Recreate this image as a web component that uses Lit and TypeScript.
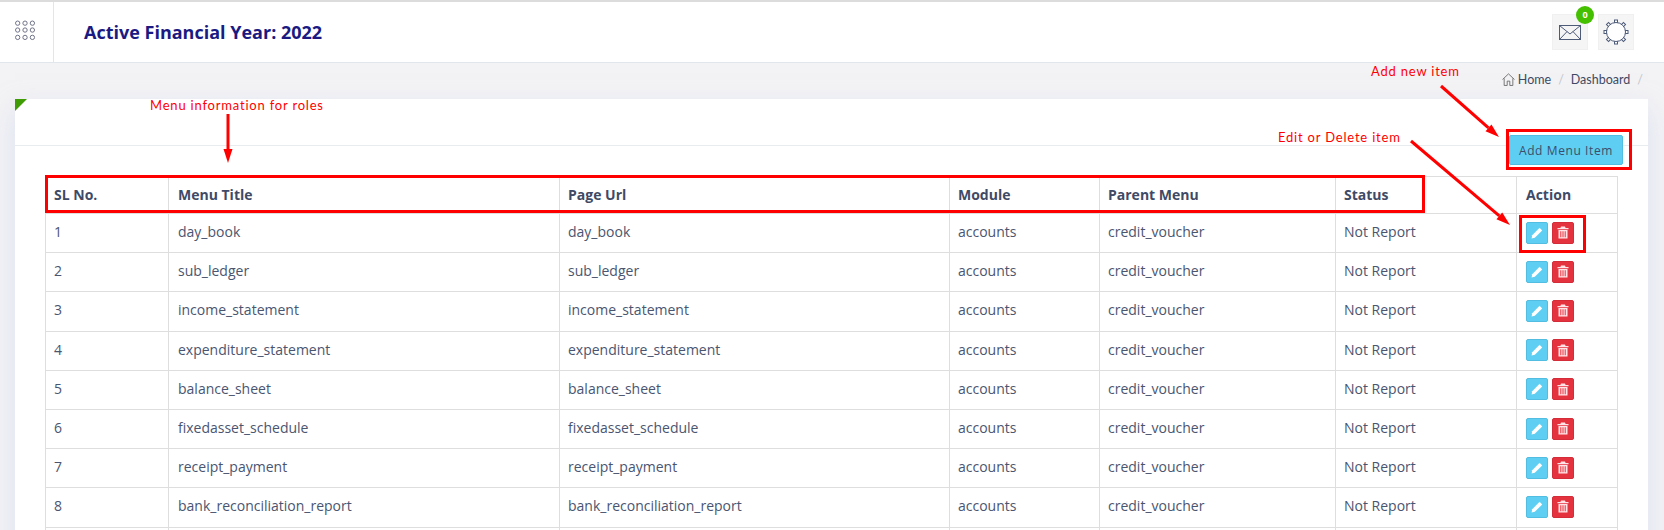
import { LitElement, html, css, svg } from 'lit';
import { customElement } from 'lit/decorators.js';

const ROWS = [
	'day_book',
	'sub_ledger',
	'income_statement',
	'expenditure_statement',
	'balance_sheet',
	'fixedasset_schedule',
	'receipt_payment',
	'bank_reconciliation_report',
];

// red call-outs drawn by hand on top of the screenshot: [x1, y1, x2, y2]
const ARROWS = [
	[228, 114, 228, 163],
	[1441, 86, 1499, 137],
	[1411, 141, 1510, 225],
];
// [x, y, w, h] measured on the outer edge of the 3px stroke
const BOXES = [
	[45, 175, 1380, 38],
	[1506, 129, 126, 41],
	[1519, 215, 67, 38],
];

function arrow([x1, y1, x2, y2]: number[]) {
	const a = Math.atan2(y2 - y1, x2 - x1);
	const back = 14;
	const half = 4.5;
	const bx = x2 - Math.cos(a) * back;
	const by = y2 - Math.sin(a) * back;
	const nx = -Math.sin(a) * half;
	const ny = Math.cos(a) * half;
	return svg`
		<line x1=${x1} y1=${y1} x2=${bx} y2=${by} stroke="#f00" stroke-width="3"></line>
		<polygon fill="#f00" points="${x2},${y2} ${bx + nx},${by + ny} ${bx - nx},${by - ny}"></polygon>
	`;
}

@customElement('app-root')
export class AppRoot extends LitElement {
	static styles = css`
		:host {
			display: block;
			position: relative;
			height: 530px;
			overflow: hidden;
			background: #f3f3f5;
			font-family: 'Open Sans', sans-serif;
			font-size: 14px;
			color: #4a5570;
		}
		.topbar {
			display: flex;
			align-items: stretch;
			height: 60px;
			background: #fff;
			border-top: 2px solid #dcdcdc;
			border-bottom: 1px solid #e1e5ec;
		}
		.apps {
			display: flex;
			align-items: center;
			justify-content: center;
			box-sizing: border-box;
			width: 54px;
			border-right: 1px solid #e1e5ec;
		}
		.title {
			flex: 1;
			align-self: center;
			margin: 0 0 0 30px;
			font-size: 18px;
			font-weight: 700;
			color: #1a1a82;
		}
		.tools {
			display: flex;
			gap: 10px;
			margin: 12px 30px 0 0;
		}
		.tool {
			position: relative;
			display: flex;
			align-items: center;
			justify-content: center;
			width: 36px;
			height: 36px;
			background: #f5f5f6;
			border: 1px solid #f0f0f1;
			box-sizing: border-box;
		}
		.badge {
			position: absolute;
			top: -9px;
			right: -7px;
			width: 18px;
			height: 18px;
			border-radius: 50%;
			background: #44c000;
			color: #fff;
			font-size: 9px;
			font-weight: 700;
			line-height: 18px;
			text-align: center;
		}
		.crumbs {
			display: flex;
			align-items: center;
			justify-content: flex-end;
			gap: 6px;
			height: 32px;
			margin-bottom: 4px;
			padding-right: 20px;
			font-family: 'Lato', sans-serif;
			font-size: 12.5px;
			color: #3f4a63;
		}
		.crumbs .home {
			display: flex;
			align-items: center;
			gap: 3px;
		}
		.crumbs .sep {
			color: #c4c7cc;
			margin: 0 1px;
		}
		.card {
			position: relative;
			margin: 0 16px 0 15px;
			background: #fff;
			box-shadow: 0 10px 24px rgba(205, 212, 240, 0.6);
		}
		.corner {
			position: absolute;
			left: 0;
			top: 0;
			width: 0;
			height: 0;
			border-top: 12px solid #3f9c05;
			border-right: 12px solid transparent;
		}
		.card-head {
			display: flex;
			justify-content: flex-end;
			align-items: flex-start;
			height: 46px;
			padding-right: 25px;
			border-bottom: 1px solid #e9ecef;
		}
		.add {
			position: relative;
			margin-top: 36px;
			width: 114px;
			height: 30px;
			padding: 0;
			background: #5ecff2;
			border: 1px solid #52bde0;
			border-radius: 2px;
			font-family: 'Open Sans', sans-serif;
			font-size: 12px;
			letter-spacing: 0.6px;
			color: #3d4d6b;
		}
		.card-body {
			padding: 30px 30px 0;
		}
		table {
			width: 1572px;
			table-layout: fixed;
			border-collapse: collapse;
		}
		th,
		td {
			border: 1px solid #dedede;
			padding: 0 8px 2px 8px;
			text-align: left;
			white-space: nowrap;
		}
		th:nth-child(2),
		td:nth-child(2),
		th:last-child,
		td:last-child {
			padding-left: 9px;
		}
		th {
			height: 34px;
			font-weight: 700;
			color: #3f4a66;
		}
		td {
			height: 35.2px;
			padding-bottom: 3px;
		}
		.actions {
			display: flex;
			gap: 4px;
			margin-top: 2px;
		}
		.act {
			display: flex;
			align-items: center;
			justify-content: center;
			width: 22px;
			height: 22px;
			border-radius: 2px;
			box-sizing: border-box;
		}
		.edit {
			background: #5ecff2;
			border: 1px solid #52bde0;
		}
		.del {
			background: #e5323f;
			border: 1px solid #d52c39;
		}
		.marks {
			position: absolute;
			left: 0;
			top: 0;
			width: 1664px;
			height: 530px;
			pointer-events: none;
		}
		.note {
			position: absolute;
			font-family: 'Lato', sans-serif;
			font-size: 13px;
			letter-spacing: 0.8px;
			line-height: 16px;
			color: #f00;
			white-space: nowrap;
		}
		.note-roles {
			left: 150px;
			top: 97px;
		}
		.note-add {
			left: 1371px;
			top: 63px;
		}
		.note-edit {
			left: 1278px;
			top: 129px;
		}
	`;

	renderApps() {
		const at = [18, 25.5, 33];
		const ys = [23, 30, 37.5];
		return html`<svg width="54" height="60" viewBox="0 2 54 60" fill="none" stroke="#6d7086" stroke-width="1">
			${ys.map((y) => at.map((x) => svg`<circle cx=${x} cy=${y} r="2.2"></circle>`))}
		</svg>`;
	}

	renderGear() {
		const teeth = [0, 45, 90, 135, 180, 225, 270, 315];
		return html`<svg width="26" height="26" viewBox="0 0 26 26" fill="#fff" stroke="#4d5a78" stroke-width="1">
			${teeth.map((t) => svg`<rect x="11.5" y="1" width="3" height="3.5" transform="rotate(${t} 13 13)"></rect>`)}
			<circle cx="13" cy="13" r="9.5"></circle>
		</svg>`;
	}

	render() {
		return html`
			<header class="topbar">
				<div class="apps">${this.renderApps()}</div>
				<h1 class="title">Active Financial Year: 2022</h1>
				<div class="tools">
					<div class="tool">
						<svg width="22" height="15" viewBox="0 0 22 15" fill="none" stroke="#4d5a78" stroke-width="1">
							<rect x="0.5" y="0.5" width="21" height="14"></rect>
							<path d="M0.5 0.5 L11 9 L21.5 0.5 M0.5 14.5 L8 6.6 M21.5 14.5 L14 6.6"></path>
						</svg>
						<span class="badge">0</span>
					</div>
					<div class="tool">${this.renderGear()}</div>
				</div>
			</header>
			<nav class="crumbs">
				<span class="home">
					<svg width="13" height="13" viewBox="0 0 12 12" fill="none" stroke="#666" stroke-width="0.8">
						<path d="M0.5 6 L6 0.8 L11.5 6 M2 5 V11.5 H4.8 V7.5 H7.2 V11.5 H10 V5"></path>
					</svg>
					Home
				</span>
				<span class="sep">/</span>
				<span>Dashboard</span>
				<span class="sep">/</span>
			</nav>
			<section class="card">
				<i class="corner"></i>
				<div class="card-head"><button class="add">Add Menu Item</button></div>
				<div class="card-body">
					<table>
						<colgroup>
							<col style="width:123px" />
							<col style="width:391px" />
							<col style="width:390px" />
							<col style="width:150px" />
							<col style="width:236px" />
							<col style="width:181px" />
							<col style="width:101px" />
						</colgroup>
						<thead>
							<tr>
								<th>SL No.</th>
								<th>Menu Title</th>
								<th>Page Url</th>
								<th>Module</th>
								<th>Parent Menu</th>
								<th>Status</th>
								<th>Action</th>
							</tr>
						</thead>
						<tbody>
							${ROWS.map(
								(name, i) => html`
									<tr>
										<td>${i + 1}</td>
										<td>${name}</td>
										<td>${name}</td>
										<td>accounts</td>
										<td>credit_voucher</td>
										<td>Not Report</td>
										<td>
											<div class="actions">
												<span class="act edit">
													<svg width="12" height="12" viewBox="0 0 12 12" fill="#fff">
														<path d="M8.6 0.8 L11.2 3.4 L3.8 10.8 L0.6 11.4 L1.2 8.2 Z"></path>
													</svg>
												</span>
												<span class="act del">
													<svg width="12" height="13" viewBox="0 0 12 13" fill="#ffe3e6">
														<path d="M4 0.5 H8 L8.6 2 H11.5 V3.2 H0.5 V2 H3.4 Z M1.5 4 H10.5 V12.5 H1.5 Z M3.3 5.2 V11.3 H4.3 V5.2 Z M5.5 5.2 V11.3 H6.5 V5.2 Z M7.7 5.2 V11.3 H8.7 V5.2 Z" fill-rule="evenodd"></path>
													</svg>
												</span>
											</div>
										</td>
									</tr>
								`
							)}
							<tr>
								<td></td><td></td><td></td><td></td><td></td><td></td><td></td>
							</tr>
						</tbody>
					</table>
				</div>
			</section>
			<svg class="marks" viewBox="0 0 1664 530" fill="none">
				${BOXES.map(
					([x, y, w, h]) => svg`<rect x=${x + 1.5} y=${y + 1.5} width=${w - 3} height=${h - 3} stroke="#f00" stroke-width="3"></rect>`
				)}
				${ARROWS.map(arrow)}
			</svg>
			<span class="note note-roles">Menu information for roles</span>
			<span class="note note-add">Add new item</span>
			<span class="note note-edit">Edit or Delete item</span>
		`;
	}
}
